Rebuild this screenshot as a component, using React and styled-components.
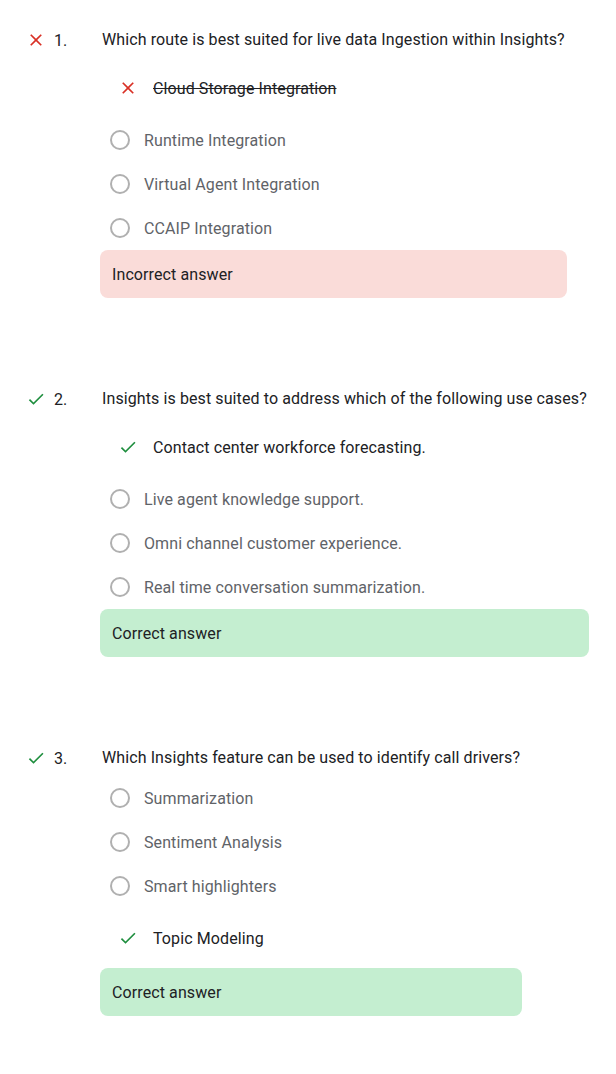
import styled, { createGlobalStyle } from "styled-components";

const GlobalStyle = createGlobalStyle`
  body {
    margin: 0;
    background: #ffffff;
    font-family: Roboto, "Noto Sans", Arial, sans-serif;
    letter-spacing: 0.1px;
    color: #202124;
  }
`;

const questions = [
  {
    id: 1,
    correct: false,
    text: "Which route is best suited for live data Ingestion within Insights?",
    chosen: "Cloud Storage Integration",
    chosenFirst: true,
    others: ["Runtime Integration", "Virtual Agent Integration", "CCAIP Integration"],
  },
  {
    id: 2,
    correct: true,
    text: "Insights is best suited to address which of the following use cases?",
    chosen: "Contact center workforce forecasting.",
    chosenFirst: true,
    others: [
      "Live agent knowledge support.",
      "Omni channel customer experience.",
      "Real time conversation summarization.",
    ],
  },
  {
    id: 3,
    correct: true,
    text: "Which Insights feature can be used to identify call drivers?",
    chosen: "Topic Modeling",
    chosenFirst: false,
    others: ["Summarization", "Sentiment Analysis", "Smart highlighters"],
  },
];

const CloseIcon = ({ color }) => (
  <svg width="20" height="20" viewBox="0 0 24 24">
    <path
      fill={color}
      d="M19 6.41 17.59 5 12 10.59 6.41 5 5 6.41 10.59 12 5 17.59 6.41 19 12 13.41 17.59 19 19 17.59 13.41 12z"
    />
  </svg>
);

const CheckIcon = ({ color }) => (
  <svg width="20" height="20" viewBox="0 0 24 24">
    <path fill={color} d="M9 16.17 4.83 12l-1.42 1.41L9 19 21 7l-1.41-1.41z" />
  </svg>
);

const StatusIcon = ({ correct }) =>
  correct ? <CheckIcon color="#1e8e3e" /> : <CloseIcon color="#d93025" />;

const Page = styled.div`
  padding: 22px 0 40px 26px;
  display: flex;
  flex-direction: column;
  gap: 83px;
`;

const Question = styled.section`
  display: flex;
  align-items: flex-start;
`;

const Marker = styled.div`
  width: 74px;
  height: 36px;
  flex-shrink: 0;
  display: flex;
  align-items: center;
  gap: 8px;
  font-size: 16px;
  color: #202124;

  svg {
    display: block;
  }
`;

const Body = styled.div`
  width: fit-content;
  display: flex;
  flex-direction: column;
`;

const Prompt = styled.div`
  height: 36px;
  line-height: 36px;
  padding: 0 2px;
  font-size: 16px;
  white-space: nowrap;
  color: #202124;
`;

const Choice = styled.div`
  height: 60px;
  display: flex;
  align-items: center;
  gap: 15px;
  padding-left: 18px;
  font-size: 16px;
  color: #202124;

  svg {
    display: block;
    flex-shrink: 0;
  }
`;

const ChoiceText = styled.span`
  text-decoration: ${(p) => (p.$struck ? "line-through" : "none")};
`;

const Option = styled.div`
  height: 44px;
  display: flex;
  align-items: center;
  gap: 12px;
  padding-left: 8px;
  font-size: 16px;
  color: #5f6368;
`;

const Radio = styled.span`
  width: 24px;
  height: 24px;
  display: flex;
  align-items: center;
  justify-content: center;
  flex-shrink: 0;

  &::before {
    content: "";
    width: 16px;
    height: 16px;
    border: 2px solid #b0b0b0;
    border-radius: 50%;
  }
`;

const Feedback = styled.div`
  height: 48px;
  display: flex;
  align-items: center;
  padding: 0 12px;
  border-radius: 8px;
  font-size: 16px;
  color: #202124;
  background: ${(p) => (p.$correct ? "#c4eed0" : "#fadcd9")};
`;

const ChosenRow = ({ q }) => (
  <Choice>
    <StatusIcon correct={q.correct} />
    <ChoiceText $struck={!q.correct}>{q.chosen}</ChoiceText>
  </Choice>
);

export default function App() {
  return (
    <>
      <GlobalStyle />
      <Page>
        {questions.map((q) => (
          <Question key={q.id}>
            <Marker>
              <StatusIcon correct={q.correct} />
              <span>{q.id}.</span>
            </Marker>
            <Body>
              <Prompt>{q.text}</Prompt>
              {q.chosenFirst && <ChosenRow q={q} />}
              {q.others.map((o) => (
                <Option key={o}>
                  <Radio />
                  {o}
                </Option>
              ))}
              {!q.chosenFirst && <ChosenRow q={q} />}
              <Feedback $correct={q.correct}>
                {q.correct ? "Correct answer" : "Incorrect answer"}
              </Feedback>
            </Body>
          </Question>
        ))}
      </Page>
    </>
  );
}
